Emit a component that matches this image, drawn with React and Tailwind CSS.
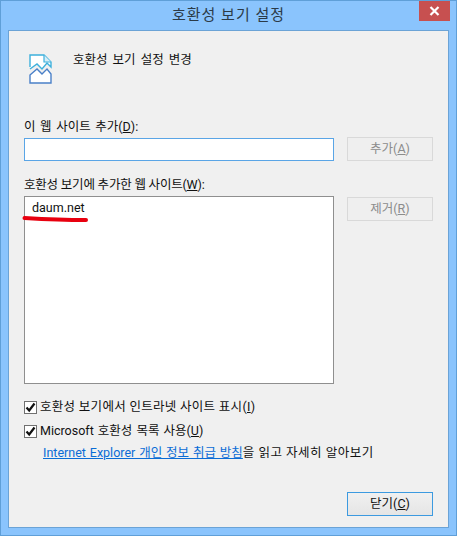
import React from "react";

function Check() {
  return (
    <span className="flex h-[13px] w-[13px] items-center justify-center border border-[#707070] bg-white">
      <svg width="11" height="11" viewBox="0 0 11 11">
        <path d="M1.5 5.5 L4.2 8.5 L9.5 1.5" fill="none" stroke="#111" strokeWidth="2.2" />
      </svg>
    </span>
  );
}

function Btn({ label, k, disabled }) {
  return (
    <div
      className={
        "flex h-[24px] w-[86px] items-center justify-center border text-[12.5px] " +
        (disabled
          ? "border-[#d9d9d9] bg-[#efefef] text-[#8c8c8c]"
          : "border-[#3c9ae0] bg-gradient-to-b from-[#f0f0f0] to-[#e5e5e5] text-[#111]")
      }
    >
      <span>
        {label}(<span className="underline">{k}</span>)
      </span>
    </div>
  );
}

export default function App() {
  return (
    <div className="flex h-[536px] w-[457px] flex-col overflow-hidden border border-[#5f9fd8] bg-[#8ac4fd] font-['Roboto','Noto_Sans_CJK_KR',sans-serif] text-[12.5px] leading-[16px] text-[#111]">
      <div className="relative flex h-[29px] shrink-0 items-center justify-center">
        <span className="mt-[-2px] text-[15px] tracking-[1px] text-[#2b3a47]">호환성 보기 설정</span>
        <div className="absolute right-[6px] top-0 flex h-[20px] w-[31px] items-center justify-center bg-[#c75050]">
          <svg width="11" height="10" viewBox="0 0 11 10">
            <path d="M1.5 1 L9.5 9 M9.5 1 L1.5 9" stroke="#fff" strokeWidth="2.2" />
          </svg>
        </div>
      </div>

      <div className="relative mx-[7px] flex h-[498px] flex-col border border-[#6ba3d6] bg-[#f0f0f0] px-[15px]">
        <div className="mt-[23px] flex h-[30px] items-start">
          <svg width="24" height="30" viewBox="0 0 24 30" className="ml-[5px] shrink-0">
            <path d="M1 13 V1 H15 L22 8 V13 L18 9 L13 15 L8 10 L1 15" fill="#fff" stroke="#3db0dc" strokeWidth="1.4" />
            <path d="M15 1 V8 H22" fill="#d5eef8" stroke="#3db0dc" strokeWidth="1.2" />
            <path d="M1 21 L8 15 L13 20 L18 15 L22 20 V29 H1 Z" fill="#fff" stroke="#4a80c8" strokeWidth="1.4" />
          </svg>
          <span className="ml-[20px] mt-[-2px] [word-spacing:2px]">호환성 보기 설정 변경</span>
        </div>

        <label className="mt-[35px] block h-[16px] [word-spacing:1.5px]">
          이 웹 사이트 추가(<span className="underline">D</span>):
        </label>
        <div className="mt-[2px] flex items-start justify-between">
          <div className="mt-[1px] h-[23px] w-[310px] border border-[#5aa5e6] bg-white" />
          <Btn label="추가" k="A" disabled />
        </div>

        <label className="mt-[16px] block h-[16px] tracking-[-0.2px]">
          호환성 보기에 추가한 웹 사이트(<span className="underline">W</span>):
        </label>
        <div className="mt-[3px] flex items-start justify-between">
          <div className="relative h-[188px] w-[310px] border border-[#8f8f8f] bg-white pl-[7px] pt-[3px]">
            <span>daum.net</span>
            <svg width="68" height="10" viewBox="0 0 68 10" className="absolute left-[-3px] top-[17px]">
              <path d="M2.5 4 C20 5 40 6 64 6" fill="none" stroke="#e8000f" strokeWidth="4" strokeLinecap="round" />
            </svg>
          </div>
          <div className="mt-[1px]"><Btn label="제거" k="R" disabled /></div>
        </div>

        <div className="mt-[15px] flex h-[16px] items-center gap-[3px]">
          <Check />
          <span className="tracking-[0.3px]">호환성 보기에서 인트라넷 사이트 표시(<span className="underline">I</span>)</span>
        </div>
        <div className="mt-[8px] flex h-[16px] items-center gap-[3px]">
          <Check />
          <span className="[word-spacing:1px]">Microsoft 호환성 목록 사용(<span className="underline">U</span>)</span>
        </div>
        <div className="mt-[6px] ml-[19px] h-[16px]">
          <span className="text-[#0a6cd6] underline [word-spacing:0.8px]">Internet Explorer 개인 정보 취급 방침</span>
          <span className="tracking-[0.5px]">을 읽고 자세히 알아보기</span>
        </div>

        <div className="mt-[31px] flex justify-end">
          <Btn label="닫기" k="C" />
        </div>
      </div>
    </div>
  );
}
